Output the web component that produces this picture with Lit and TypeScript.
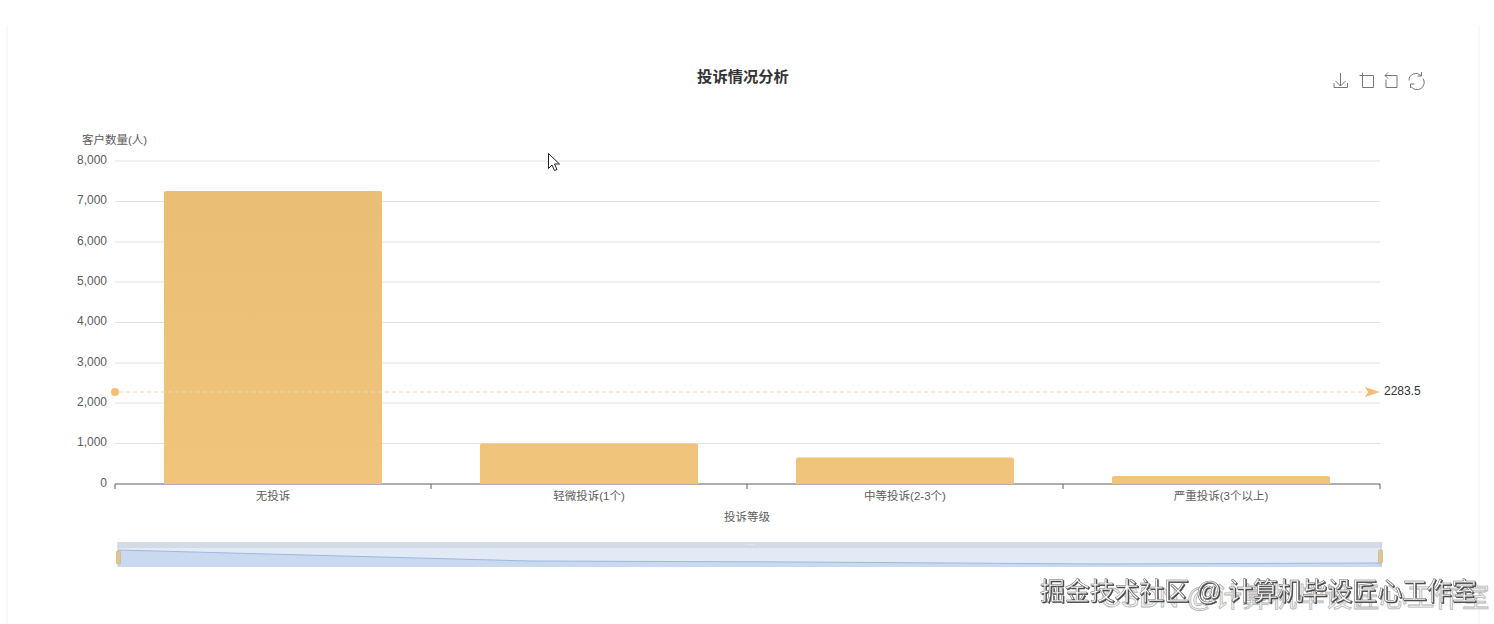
import { LitElement, html, svg, css } from "lit";
import { customElement } from "lit/decorators.js";

const GRID = [
  { y: 161, label: "8,000" },
  { y: 201.5, label: "7,000" },
  { y: 242, label: "6,000" },
  { y: 282, label: "5,000" },
  { y: 322.5, label: "4,000" },
  { y: 363, label: "3,000" },
  { y: 403, label: "2,000" },
  { y: 443.5, label: "1,000" },
  { y: 484, label: "0" },
];
const BARS = [
  { x: 164, top: 191, label: "无投诉", cx: 273 },
  { x: 480, top: 443.5, label: "轻微投诉(1个)", cx: 589 },
  { x: 796, top: 457.5, label: "中等投诉(2-3个)", cx: 905 },
  { x: 1112, top: 476, label: "严重投诉(3个以上)", cx: 1221 },
];
const TICKS = [115, 431, 747, 1063, 1380];

@customElement("app-root")
export class AppRoot extends LitElement {
  static styles = css`
    :host { display: block; width: 1494px; height: 624px; overflow: hidden; background: #fff; }
    .page { height: 624px; padding: 25px 14px 0 6px; box-sizing: border-box; }
    .card { height: 599px; position: relative; border-left: 2px solid #f8f8f8; border-right: 2px solid #f8f8f8; border-top: 1px solid #fdfdfd; box-sizing: border-box; }
    .chart { position: absolute; left: -8px; top: -26px; width: 1494px; height: 624px; display: block; }
    text { font-family: "Liberation Sans", "Noto Sans CJK SC", sans-serif; }
    .title { font-size: 15.300px; font-weight: 700; fill: #333; }
    .axis { font-size: 11.500px; fill: #5c5c5c; }
    .yl { font-size: 12px; fill: #5c5c5c; }
    .mark { font-size: 12px; fill: #333; }
    .icon { fill: none; stroke: #777; stroke-width: 1; }
    .wm-back { font-size: 27.500px; fill: #f6f6f6; stroke: #b4b4b4; stroke-width: 0.8px; }
    .wm-front { font-size: 24.850px; fill: #fbfbfb; stroke: #6a6a6a; stroke-width: 0.5px; filter: drop-shadow(1px 1px 0 #444); }
  `;

  render() {
    return html`<div class="page"><div class="card">
      <svg class="chart" viewBox="0 0 1494 624" role="img">
        <defs>
          <linearGradient id="bar" gradientUnits="userSpaceOnUse" x1="0" y1="191" x2="0" y2="484">
            <stop offset="0" stop-color="#eabf75"/>
            <stop offset="1" stop-color="#f0c47a"/>
          </linearGradient>
        </defs>
        <text class="title" x="743" y="82" text-anchor="middle">投诉情况分析</text>

        ${svg`<g class="icon">
          <path d="M1340.500 73v13M1335.500 81l5 5 5-5M1334 83v4.500h13.500V83"/>
          <path d="M1359.500 75.500h14v12h-11V72.500"/>
          <path d="M1389 75.500h-4l3-3M1385 75.500l3 3M1388 75.500h9v12h-11v-8"/>
          <path d="M1409 80.500a7 7 0 0 1 12-5M1423 78.500a7 7 0 0 1-12 8M1421.500 72v4h-4M1410.500 88v-4h4"/>
        </g>`}

        <text class="axis" x="114.500" y="143.500" text-anchor="middle">客户数量(人)</text>
        ${GRID.map((g) => svg`
          <line x1="115" x2="1380" y1=${g.y} y2=${g.y} stroke=${g.y === 484 ? "#5f5f5f" : "#e2e2e2"} stroke-width="1"/>
          <text class="yl" x="107" y=${g.y + 2.500} text-anchor="end">${g.label}</text>`)}

        ${BARS.map((b) => svg`
          <path d="M${b.x} 484V${b.top + 2}q0-2 2-2h214q2 0 2 2V484z" fill="url(#bar)"/>
          <text class="axis" x=${b.cx} y="500" text-anchor="middle">${b.label}</text>`)}
        ${TICKS.map((x) => svg`<line x1=${x} x2=${x} y1="484" y2="489" stroke="#5f5f5f"/>`)}
        <text class="axis" x="747" y="521" text-anchor="middle">投诉等级</text>

        <line x1="119" x2="1366" y1="392" y2="392" stroke="#f0d6a8" stroke-dasharray="4 3"/>
        <circle cx="115" cy="392" r="4" fill="#f0c07a"/>
        <path d="M1365 387l15 5-15 5 3-5z" fill="#f0c07a"/>
        <text class="mark" x="1384" y="395">2283.5</text>

        <rect x="118" y="542" width="1264" height="25" fill="#e2ebf5"/>
        <rect x="118" y="542" width="1264" height="6" fill="#d2dbe6"/>
        <path d="M118 550L530 561L800 562L1100 564L1382 563V567H118z" fill="#c9d9ef"/>
        <path d="M118 550L530 561L800 562L1100 564L1382 563" fill="none" stroke="#9db8de" stroke-width="1"/>
        <line x1="118" x2="118" y1="542" y2="567" stroke="#c4ccd6"/>
        <line x1="1381" x2="1381" y1="542" y2="567" stroke="#c4ccd6"/>
        <rect x="116.500" y="551" width="4" height="13" rx="1" fill="#e8c485" stroke="#b7b3a3" stroke-width=".6"/>
        <rect x="1378.500" y="550" width="4" height="13" rx="1" fill="#e8c485" stroke="#b7b3a3" stroke-width=".6"/>
        <path d="M746.500 544.500h1M750 544.500h1M753 544.500h1" stroke="#f4f7fb"/>

        <path d="M548.500 153.500v15l3.500-3.500 2.500 5.500 2.500-1-2.500-5.500h5z" fill="#fff" stroke="#222" stroke-width="1"/>

        <text class="wm-back" x="1101" y="607">CSDN @计算机毕设匠心工作室</text>
        <text class="wm-front" x="1040" y="600">掘金技术社区 @ 计算机毕设匠心工作室</text>
      </svg>
    </div></div>`;
  }
}
